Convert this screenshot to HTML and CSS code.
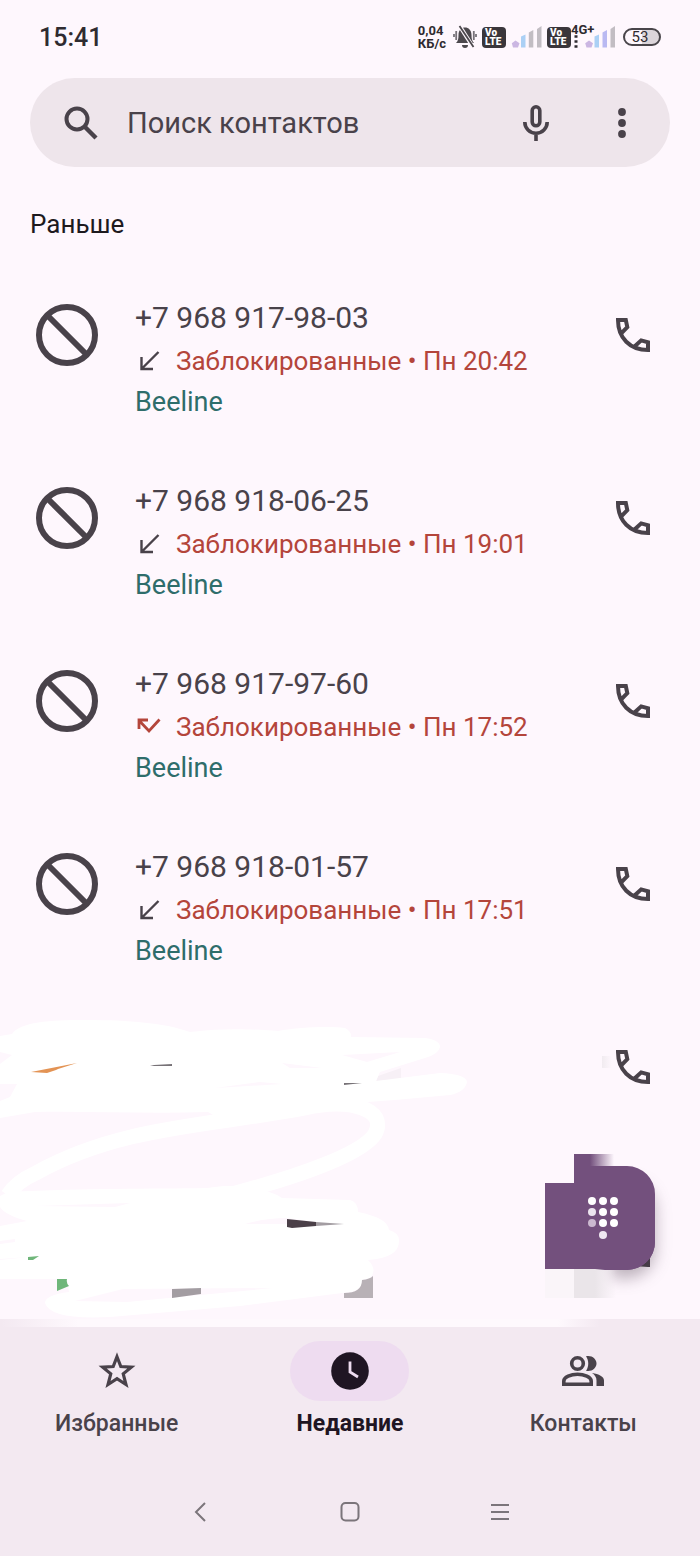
FILE: index.html
```
<!DOCTYPE html>
<html lang="ru">
<head>
<meta charset="UTF-8">
<meta name="viewport" content="width=device-width, initial-scale=1.0">
<title>Недавние</title>
<link rel="stylesheet" href="styles.css">
</head>
<body>
<!-- shared icons -->
<svg class="sprite" aria-hidden="true">
    <symbol id="ban" viewBox="0 0 62 62">
        <circle cx="31" cy="31" r="28" fill="none" stroke="currentColor" stroke-width="6"/>
        <path d="M12 12l38 38" stroke="currentColor" stroke-width="6"/>
    </symbol>
    <symbol id="call" viewBox="0 0 34 34">
        <path d="M5.500 15.200L11.300 9.200 9.800 2H2C2 20 14 32 32 32V24.200L25.200 22.400 18.800 28.300" fill="none" stroke="currentColor" stroke-width="4"/>
    </symbol>
    <symbol id="incoming" viewBox="0 0 26 24">
        <path d="M23.500 3L7 19.500M6.500 8v12H18" fill="none" stroke="currentColor" stroke-width="2.400"/>
    </symbol>
    <symbol id="missed" viewBox="0 0 26 24">
        <path d="M24.500 4.500L14 16 4.500 6M4 14V5h9" fill="none" stroke="currentColor" stroke-width="2.800"/>
    </symbol>
</svg>

<header class="status">
    <time class="clock">15:41</time>
    <div class="speed">0,04<br>КБ/с</div>
    <svg class="bell" viewBox="0 0 24 24">
        <path d="M3 18c2-2 2.500-4 2.500-8 0-5 3-7.500 6.500-7.500s6.500 2.500 6.500 7.500c0 4 .5 6 2.500 8zM9 20h6a3 3 0 0 1-6 0z" fill="#4c484d"/>
        <path d="M3.200 6v9M1 9v3M20.800 6v9M23 9v3" stroke="#777279" stroke-width="1.800"/>
        <path d="M6 0l14 22" stroke="#fef7fd" stroke-width="4"/>
        <path d="M6.500 1l14 21" stroke="#4c484d" stroke-width="1.800"/>
    </svg>
    <div class="volte">Vo<br>LTE</div>
    <svg class="signal" viewBox="0 0 32 24">
        <path d="M4.500 15.500l4 2.700-1.500 4.300H2L.8 18.200z" fill="#cbb6e2"/>
        <path d="M10 11.500l4.500-2v13H10z" fill="#abd0f5"/>
        <path d="M17.800 7.500l4.500-2.500v17.500h-4.500zM26 4l4.500-3v21.500H26z" fill="#c2bdc3"/>
    </svg>
    <div class="volte">Vo<br>LTE</div>
    <svg class="signal-wide" viewBox="0 0 46 30">
        <path d="M18 18.500l4 2.700-1.500 4.300h-5L14.200 21.200z" fill="#cbb6e2"/>
        <path d="M23.500 14.500l4.500-2v13h-4.500z" fill="#abd0f5"/>
        <path d="M31.500 10.500L36 8v17.500h-4.500z" fill="#b9b9f2"/>
        <path d="M39.500 7L44 4v21.500h-4.500z" fill="#c2bdc3"/>
        <path d="M3.500 14.500h3M3.500 19.500h3M3.500 24.500h3" stroke="#2f2b30" stroke-width="2.600"/>
        <text x="0" y="12">4G+</text>
    </svg>
    <div class="battery">53</div>
</header>

<form class="search" role="search">
    <label for="query"><svg class="icon-search" viewBox="0 0 34 34"><title>Поиск</title>
        <circle cx="13" cy="13" r="10.500" fill="none" stroke="currentColor" stroke-width="4"/>
        <path d="M20 20l12 12" stroke="currentColor" stroke-width="4.400"/>
    </svg></label>
    <input type="text" id="query" name="query" placeholder="Поиск контактов">
    <button type="button" aria-label="Голосовой поиск">
        <svg class="icon-mic" viewBox="0 0 26 36">
            <path d="M9.200 5.600a3.800 3.800 0 0 1 7.600 0V17a3.800 3.800 0 0 1-7.600 0z M1.800 17a11.200 11.200 0 0 0 22.400 0M13 28v8" fill="none" stroke="currentColor" stroke-width="3.600"/>
        </svg>
    </button>
    <button type="button" aria-label="Ещё">
        <svg class="icon-more" viewBox="0 0 8 30" fill="currentColor">
            <circle cx="4" cy="4" r="3.900"/><circle cx="4" cy="15" r="3.900"/><circle cx="4" cy="26" r="3.900"/>
        </svg>
    </button>
</form>

<main>
    <h2>Раньше</h2>
    <ul class="calls">
        <li>
            <svg class="ban"><use href="#ban"/></svg>
            <div class="info">
                <div class="number">+7 968 917-98-03</div>
                <div class="detail"><svg><use href="#incoming"/></svg>Заблокированные • Пн 20:42</div>
                <div class="carrier">Beeline</div>
            </div>
            <button type="button" aria-label="Позвонить"><svg><use href="#call"/></svg></button>
        </li>
        <li>
            <svg class="ban"><use href="#ban"/></svg>
            <div class="info">
                <div class="number">+7 968 918-06-25</div>
                <div class="detail"><svg><use href="#incoming"/></svg>Заблокированные • Пн 19:01</div>
                <div class="carrier">Beeline</div>
            </div>
            <button type="button" aria-label="Позвонить"><svg><use href="#call"/></svg></button>
        </li>
        <li>
            <svg class="ban"><use href="#ban"/></svg>
            <div class="info">
                <div class="number">+7 968 917-97-60</div>
                <div class="detail"><svg class="missed"><use href="#missed"/></svg>Заблокированные • Пн 17:52</div>
                <div class="carrier">Beeline</div>
            </div>
            <button type="button" aria-label="Позвонить"><svg><use href="#call"/></svg></button>
        </li>
        <li>
            <svg class="ban"><use href="#ban"/></svg>
            <div class="info">
                <div class="number">+7 968 918-01-57</div>
                <div class="detail"><svg><use href="#incoming"/></svg>Заблокированные • Пн 17:51</div>
                <div class="carrier">Beeline</div>
            </div>
            <button type="button" aria-label="Позвонить"><svg><use href="#call"/></svg></button>
        </li>
        <li>
            <button type="button" aria-label="Позвонить"><svg><use href="#call"/></svg></button>
        </li>
        <li>
            <button type="button" aria-label="Позвонить"><svg><use href="#call"/></svg></button>
        </li>
    </ul>

    <!-- white marker over the last calls -->
    <svg class="scribble" viewBox="0 0 700 330" aria-hidden="true">
        <defs>
            <linearGradient id="edge">
                <stop offset="0" stop-color="#fef7fd" stop-opacity="0"/>
                <stop offset=".13" stop-color="#fef9fd"/>
                <stop offset=".93" stop-color="#fef9fd"/>
                <stop offset="1" stop-color="#fef7fd" stop-opacity="0"/>
            </linearGradient>
            <linearGradient id="smudge">
                <stop offset="0" stop-color="#f1ebf0"/>
                <stop offset="1" stop-color="#fef7fd"/>
            </linearGradient>
        </defs>
        <path d="M0 319H600V327H0z" fill="url(#edge)"/>
        <path d="M602 56h10v12h-10z" fill="url(#smudge)"/>
        <path d="M378 76l23-8v12l-25 2z" fill="#f7f0f6"/>
        <g fill="#fff">
            <path d="M0 36L12 34C20 22 50 20 85 20C130 20 165 23 190 32C230 27 260 30 278 31C300 27 330 26 345 28Q352 32 351 37L425 38Q440 40 440 47Q439 54 425 58L380 72 376 81 440 73Q466 74 467 82Q465 92 450 95L395 100 340 104 305 114 215 116 208 112C150 114 90 111 35 112L0 118V101L10 97 17 84 0 84V64L12 55 0 52z"/>
            <path d="M8 192C90 188 150 189 207 188 240 182 270 190 282 198L350 200Q358 202 358 212Q388 218 389 230Q399 233 399 240Q400 258 368 260Q378 270 370 278L362 280Q362 290 350 292L240 306 110 317Q50 320 45 303Q45 295 69 292L67 279H0V226L27 221Q5 215 0 207V196z"/>
        </g>
        <path d="M8 195Q16 182 36 173C120 126 210 126 305 108C350 98 388 109 375 134C362 154 300 176 232 194" fill="none" stroke="#fff" stroke-width="15"/>
        <path d="M342 55L400 52 367 62zM282 63l40 5-32 0zM215 88l45-6 22 2zM35 206l95-3-15 4zM245 224q20-6 42-6l30 4-30 2zM75 301l48-12 150-1-73 7-73 7zM0 241l15-2v3L0 244zM0 259l28-2-28 3z" fill="#fef7fd"/>
        <path d="M31 72l46-9-19 6-2 1-9 3z" fill="#e39354"/>
        <path d="M150 66l4-1 18-1v2zM344 83l18 0-18 2z" fill="#777277"/>
        <path d="M287 219l29 3v4l-24 2-5-1z" fill="#4b4048"/>
        <path d="M316 222l28 2-28 2zM172 289l29-1v6l-29 4z" fill="#a39da2"/>
        <path d="M344 293q18 0 18-13 8-1 11-4v22h-29z" fill="#b8b1b6"/>
        <path d="M57 279h10q-1 4 2 7l-12 5zM28 257l11-1-6 4h-5z" fill="#6fb67a"/>
    </svg>

    <button type="button" class="fab" aria-label="Набор номера">
        <svg viewBox="0 0 150 180">
            <defs>
                <linearGradient id="tip">
                    <stop offset="0" stop-color="#73507d"/>
                    <stop offset=".4" stop-color="#73507d"/>
                    <stop offset="1" stop-color="#73507d" stop-opacity="0"/>
                </linearGradient>
                <linearGradient id="tail">
                    <stop offset="0" stop-color="#eae5e9"/>
                    <stop offset=".5" stop-color="#eae5e9"/>
                    <stop offset="1" stop-color="#eae5e9" stop-opacity="0"/>
                </linearGradient>
            </defs>
            <path d="M0 115h29v29H0z" fill="#faf5f9"/>
            <path d="M29 0h40v14H29z" fill="url(#tip)"/>
            <path class="fab-body" d="M66 20H82a28 28 0 0 1 28 28v40a28 28 0 0 1-28 28H66z" fill="#73507d"/>
            <path d="M29 115h42v29H29z" fill="url(#tail)"/>
            <path d="M0 29h30v86H0zM29 12H82a28 28 0 0 1 28 28v48a28 28 0 0 1-28 28H60l-10-1H29z" fill="#73507d"/>
            <g fill="#fff">
                <circle cx="47" cy="47" r="4"/><circle cx="58" cy="47" r="4"/><circle cx="69" cy="47" r="4"/>
                <circle cx="47" cy="58" r="4" fill="#ece5ef"/><circle cx="58" cy="58" r="4"/><circle cx="69" cy="58" r="4"/>
                <circle cx="47" cy="69" r="4" fill="#cbb9d0"/><circle cx="58" cy="69" r="4"/><circle cx="69" cy="69" r="4"/>
                <circle cx="58" cy="81" r="4" fill="#efe8f1"/>
            </g>
        </svg>
    </button>
</main>

<footer>
    <nav class="tabs">
        <a href="#favorites">
            <span class="pill"><svg class="star" viewBox="0 0 36 36"><path d="M18 4.500L21.600 13.800 31.600 14.400 23.900 20.700 26.500 30.800 18 25.200 9.500 30.800 12.100 20.700 4.400 14.400 14.400 13.800z" fill="none" stroke="currentColor" stroke-width="3"/></svg></span>
            Избранные
        </a>
        <a href="#recents" class="active">
            <span class="pill"><svg class="recent" viewBox="0 0 38 38"><circle cx="19" cy="19" r="18.800" fill="currentColor"/><path d="M19 9.500V20l8 5" fill="none" stroke="#eedcf0" stroke-width="2.800"/></svg></span>
            Недавние
        </a>
        <a href="#contacts">
            <span class="pill"><svg class="people" viewBox="0 0 42 32"><circle cx="15.500" cy="8.500" r="5.800" fill="none" stroke="currentColor" stroke-width="3.600"/><path d="M1.800 29.200V26C1.800 22 9 19.200 15.500 19.200S29.200 22 29.200 26v3.200z" fill="none" stroke="currentColor" stroke-width="3.600"/><path d="M24 1.200C30 0 34.500 4 34.500 8.500S30 17 24 15.800C27 11.500 27 5.500 24 1.200zM30 18c7 1 12 3.500 12 7.500V31h-7.500v-5.500c0-3-1.500-5.500-4.500-7.500z" fill="currentColor"/></svg></span>
            Контакты
        </a>
    </nav>
    <div class="system">
        <button type="button" aria-label="Назад"><svg viewBox="0 0 20 20"><path d="M15 1L6 10l9 9"/></svg></button>
        <button type="button" aria-label="Домой"><svg viewBox="0 0 20 20"><rect x="1.500" y="1" width="17" height="17.500" rx="4"/></svg></button>
        <button type="button" aria-label="Меню"><svg viewBox="0 0 20 20"><path d="M1 3h18M1 10h18M1 17h18"/></svg></button>
    </div>
</footer>
</body>
</html>
```
FILE: styles.css
```
* {
    box-sizing: border-box;
}

body {
    display: flex;
    flex-direction: column;
    min-height: 100vh;
    margin: 0;
    font-family: Roboto, "Noto Sans", sans-serif;
    color: #49424a;
    background-color: #fef7fd;
}

button {
    display: flex;
    align-items: center;
    justify-content: center;
    padding: 0;
    border: none;
    background: none;
    color: inherit;
    cursor: pointer;
}

svg {
    display: block;
    flex: none;
}

.sprite {
    display: none;
}

/* status bar */
.status {
    display: flex;
    align-items: center;
    height: 78px;
    padding: 0 39px 4px;
    color: #2f2b30;
}

.clock {
    margin-right: auto;
    font-size: 25px;
    font-weight: 500;
}

.speed {
    margin-right: 7px;
    font-size: 13px;
    font-weight: 700;
    line-height: 13px;
}

.bell {
    width: 24px;
    height: 24px;
    margin-right: 5px;
}

.volte {
    width: 24px;
    height: 21px;
    padding: 1px 3px;
    border-radius: 4px;
    background-color: #3a363b;
    color: #fff;
    font-size: 10px;
    font-weight: 900;
    line-height: 9px;
}

.signal {
    width: 32px;
    height: 24px;
    margin: 0 4px 0 5px;
}

.signal-wide {
    width: 46px;
    height: 30px;
    margin-right: 6px;
}

.signal-wide text {
    font-size: 13px;
    font-weight: 700;
    fill: #2f2b30;
}

.battery {
    width: 38px;
    height: 18px;
    padding-right: 4px;
    border: 2px solid #49454a;
    border-radius: 9px;
    background: linear-gradient(90deg, #fef7fd 50%, #dcd5da 50%);
    font-size: 15px;
    line-height: 14px;
    text-align: center;
}

/* search */
.search {
    display: flex;
    align-items: center;
    height: 89px;
    margin: 0 30px;
    padding: 0 5px 0 34px;
    border-radius: 45px;
    background-color: #eee5eb;
}

.search input {
    flex: 1;
    min-width: 0;
    margin-left: 29px;
    padding: 0;
    border: none;
    outline: none;
    background: none;
    color: inherit;
    font-family: inherit;
    font-size: 29px;
}

.search input::placeholder {
    color: inherit;
    opacity: 1;
}

.search button {
    width: 86px;
    height: 80px;
}

.icon-search {
    width: 34px;
    height: 34px;
}

.icon-mic {
    width: 26px;
    height: 36px;
}

.icon-more {
    width: 8px;
    height: 30px;
}

/* call list */
main {
    position: relative;
    flex: 1;
}

h2 {
    margin: 37px 30px 52px;
    color: #1d1a1e;
    font-size: 26px;
    font-weight: 400;
    line-height: 40px;
}

.calls {
    display: flex;
    flex-direction: column;
    gap: 57px;
    margin: 0;
    padding: 0 28px 0 36px;
    list-style: none;
}

.calls li {
    display: flex;
    align-items: flex-start;
    min-height: 126px;
}

.calls li:last-child {
    min-height: 0;
}

.ban {
    width: 62px;
    height: 62px;
    margin: 8px 37px 0 0;
}

.number {
    font-size: 30px;
    line-height: 44px;
}

.detail {
    display: flex;
    align-items: center;
    color: #b4453b;
    font-size: 26px;
    line-height: 42px;
}

.detail svg {
    width: 26px;
    height: 24px;
    margin-right: 15px;
    color: #49424a;
}

.detail .missed {
    color: #b4453b;
}

.carrier {
    color: #2e6d6b;
    font-size: 27px;
    line-height: 40px;
}

.calls button {
    width: 78px;
    height: 78px;
    margin-left: auto;
}

.calls button svg {
    width: 34px;
    height: 34px;
}

.scribble {
    position: absolute;
    left: 0;
    bottom: -11px;
    z-index: 1;
    width: 100%;
    pointer-events: none;
}

.fab {
    position: absolute;
    right: 5px;
    bottom: -15px;
    z-index: 2;
}

.fab svg {
    width: 150px;
    height: 180px;
}

.fab-body {
    filter: drop-shadow(0 8px 8px rgba(60, 40, 60, 0.35));
}

/* bottom bars */
footer {
    background-color: #f3e9f1;
}

.tabs {
    display: flex;
    padding-top: 22px;
}

.tabs a {
    display: flex;
    flex: 1;
    flex-direction: column;
    align-items: center;
    gap: 7px;
    color: #49424a;
    font-size: 23px;
    font-weight: 500;
    line-height: 32px;
    text-decoration: none;
}

.pill {
    display: flex;
    align-items: center;
    justify-content: center;
    width: 119px;
    height: 60px;
    border-radius: 30px;
}

.tabs .active {
    color: #1f1523;
    font-weight: 700;
}

.active .pill {
    background-color: #eedcf0;
}

.star {
    width: 38px;
    height: 38px;
}

.recent {
    width: 38px;
    height: 38px;
}

.people {
    width: 42px;
    height: 32px;
}

.system {
    display: flex;
    justify-content: center;
    gap: 90px;
    padding: 42px 0 14px;
}

.system button {
    width: 60px;
    height: 60px;
}

.system svg {
    width: 20px;
    height: 20px;
    fill: none;
    stroke: #7b757b;
    stroke-width: 2;
}
```
